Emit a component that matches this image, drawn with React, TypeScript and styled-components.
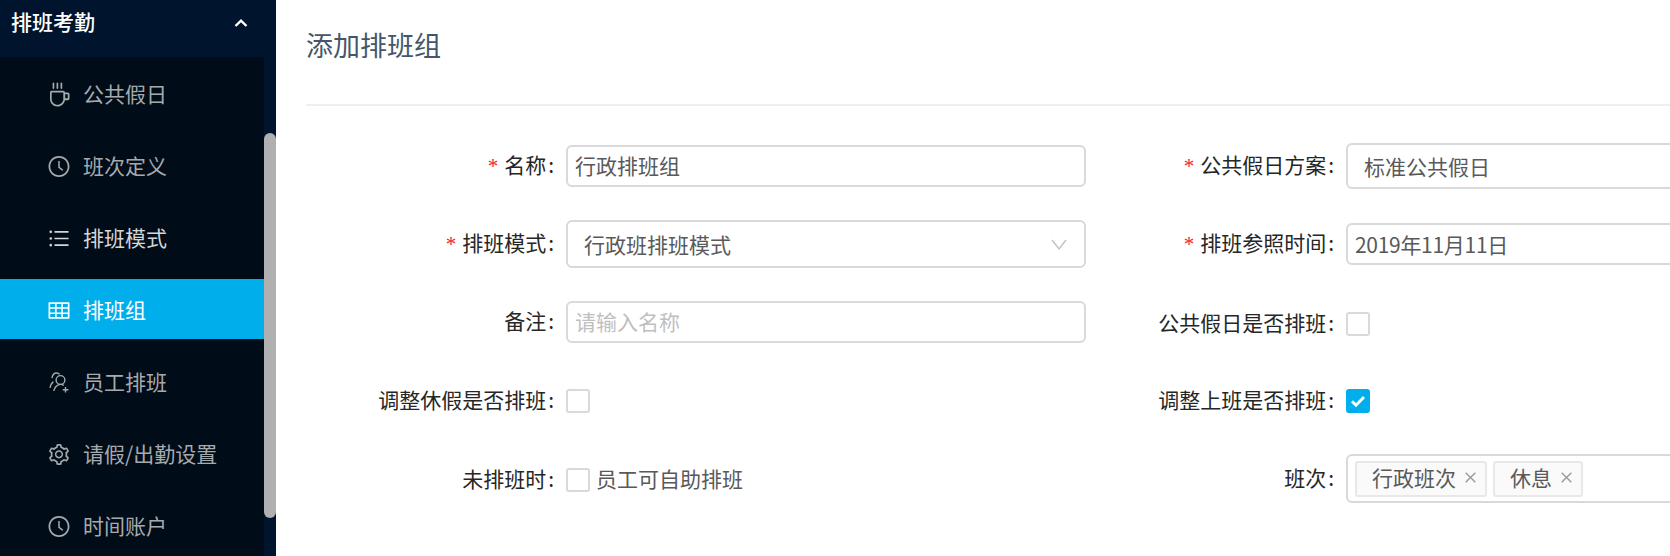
import React from "react";
import styled, { createGlobalStyle } from "styled-components";
import {
  AiOutlineClockCircle,
  AiOutlineCoffee,
  AiOutlineSetting,
  AiOutlineTable,
  AiOutlineUnorderedList,
} from "react-icons/ai";

const GlobalStyle = createGlobalStyle`
  html, body {
    margin: 0;
    height: 556px;
    overflow: hidden;
    background: #fff;
    font-family: "Noto Sans CJK SC", "Liberation Sans", sans-serif;
  }
`;

function UserPlusIcon() {
  return (
    <svg width="21" height="21" viewBox="0 0 21 21" fill="none" stroke="currentColor" strokeWidth="1.4">
      <path d="M3 6.2C3.4 3 5.4 1 7.6 1c1.2 0 2.3.5 3 1.4" />
      <path d="M4.3 9.6C2.6 11 1.5 13 1 15.8" />
      <circle cx="11.5" cy="8" r="4.4" />
      <path d="M4.8 19c.5-3.5 3.3-6.6 6.7-6.6 1.3 0 2.4.4 3.4 1" />
      <path d="M16.5 15v5.6M13.8 17.8h5.6" />
    </svg>
  );
}

const menuItems = [
  { label: "公共假日", icon: <AiOutlineCoffee /> },
  { label: "班次定义", icon: <AiOutlineClockCircle /> },
  { label: "排班模式", icon: <AiOutlineUnorderedList />, bright: true },
  { label: "排班组", icon: <AiOutlineTable />, active: true },
  { label: "员工排班", icon: <UserPlusIcon /> },
  { label: "请假/出勤设置", icon: <AiOutlineSetting /> },
  { label: "时间账户", icon: <AiOutlineClockCircle /> },
];

export default function App() {
  return (
    <Page>
      <GlobalStyle />
      <Sidebar>
        <GroupHeader>
          <span>排班考勤</span>
          <svg width="16" height="10" viewBox="0 0 16 10" fill="none" stroke="#fff" strokeWidth="2.4">
            <path d="M2.5 8L8 2.6 13.5 8" />
          </svg>
        </GroupHeader>
        <SideBody>
          <Menu>
            {menuItems.map((item) => (
              <MenuItem key={item.label} $active={item.active} $bright={item.bright}>
                <MenuIcon>{item.icon}</MenuIcon>
                {item.label}
              </MenuItem>
            ))}
          </Menu>
          <ScrollTrack>
            <ScrollThumb />
          </ScrollTrack>
        </SideBody>
      </Sidebar>

      <Main>
        <TitleBar>添加排班组</TitleBar>
        <FormGrid>
          <Field>
            <Label $required>名称</Label>
            <TextInput defaultValue="行政排班组" />
          </Field>
          <Field>
            <Label $required>公共假日方案</Label>
            <SelectBox $height={46}>标准公共假日</SelectBox>
          </Field>

          <Field>
            <Label $required>排班模式</Label>
            <SelectBox $height={48}>
              行政班排班模式
              <Caret width="16" height="11" viewBox="0 0 16 11" fill="none" stroke="#bfbfbf" strokeWidth="1.3">
                <path d="M1 1l7 9 7-9" />
              </Caret>
            </SelectBox>
          </Field>
          <Field>
            <Label $required>排班参照时间</Label>
            <DateInput defaultValue="2019年11月11日" />
          </Field>

          <Field>
            <Label>备注</Label>
            <TextInput placeholder="请输入名称" />
          </Field>
          <Field $shift={4}>
            <Label>公共假日是否排班</Label>
            <CheckBox />
          </Field>

          <Field>
            <Label>调整休假是否排班</Label>
            <CheckBox />
          </Field>
          <Field>
            <Label>调整上班是否排班</Label>
            <CheckBox $checked>
              <svg width="16" height="14" viewBox="0 0 16 14" fill="none" stroke="#fff" strokeWidth="3">
                <path d="M2 7.2l4 4L14 3" />
              </svg>
            </CheckBox>
          </Field>

          <Field>
            <Label>未排班时</Label>
            <CheckBox />
            <CheckText>员工可自助排班</CheckText>
          </Field>
          <Field $shift={-3}>
            <Label>班次</Label>
            <TagBox>
              <Tag>
                行政班次
                <TagClose />
              </Tag>
              <Tag>
                休息
                <TagClose />
              </Tag>
            </TagBox>
          </Field>
        </FormGrid>
      </Main>
    </Page>
  );
}

function TagClose() {
  return (
    <CloseIcon width="11" height="11" viewBox="0 0 11 11" fill="none" stroke="#999" strokeWidth="1.4">
      <path d="M.7.7l9.6 9.6M10.3.7L.7 10.3" />
    </CloseIcon>
  );
}

const Page = styled.div`
  display: flex;
  width: 1670px;
  height: 556px;
  overflow: hidden;
`;

const Sidebar = styled.aside`
  flex: 0 0 276px;
  height: 556px;
  background: #00152d;
  overflow: hidden;
`;

const GroupHeader = styled.div`
  display: flex;
  justify-content: space-between;
  align-items: center;
  height: 42px;
  padding: 0 27px 15px 11px;
  color: #fff;
  font-size: 21px;
  font-weight: 500;

  svg {
    margin-top: 4px;
  }
`;

const SideBody = styled.div`
  display: flex;
`;

const Menu = styled.ul`
  flex: 0 0 264px;
  height: 499px;
  margin: 0;
  padding: 6px 0 0;
  box-sizing: border-box;
  list-style: none;
  background: #000c17;
`;

const MenuItem = styled.li<{ $active?: boolean; $bright?: boolean }>`
  display: flex;
  align-items: center;
  box-sizing: border-box;
  height: 60px;
  margin-bottom: 12px;
  padding: 0 0 1px 47px;
  font-size: 21px;
  background: ${(p) => (p.$active ? "#00aeeb" : "transparent")};
  color: ${(p) => (p.$active ? "#fff" : p.$bright ? "#d4d6d8" : "#a6aaad")};
`;

const MenuIcon = styled.span`
  display: flex;
  align-items: center;
  justify-content: center;
  width: 24px;
  margin-top: 4px;
  margin-right: 12px;
  font-size: 25px;
`;

const ScrollTrack = styled.div`
  flex: 0 0 12px;
`;

const ScrollThumb = styled.div`
  width: 12px;
  height: 385px;
  margin-top: 76px;
  border-radius: 6px;
  background: #b0b0b0;
`;

const Main = styled.main`
  flex: 1;
  min-width: 0;
  padding-left: 30px;
  overflow: hidden;
`;

const TitleBar = styled.div`
  display: flex;
  align-items: center;
  height: 106px;
  padding-bottom: 16px;
  box-sizing: border-box;
  border-bottom: 2px solid #eeeeee;
  color: #44566a;
  font-size: 27px;
`;

const FormGrid = styled.div`
  display: grid;
  grid-template-columns: 780px 780px;
  grid-template-rows: 78px 78px 78px 80px 78px;
  margin-top: 21px;
`;

const Field = styled.div<{ $shift?: number }>`
  display: flex;
  align-items: center;
  margin-top: ${(p) => p.$shift ?? 0}px;
`;

const Label = styled.label<{ $required?: boolean }>`
  flex: 0 0 248px;
  margin-right: 12px;
  margin-bottom: 4px;
  text-align: right;
  color: #262626;
  font-size: 21px;
  white-space: nowrap;

  &::before {
    content: ${(p) => (p.$required ? '"*"' : "none")};
    margin-right: 6px;
    color: #f5222d;
    font-family: "Liberation Serif", serif;
    font-size: 21px;
  }

  &::after {
    content: ":";
    margin-left: 2px;
  }
`;

const TextInput = styled.input`
  width: 520px;
  height: 42px;
  box-sizing: border-box;
  padding: 0 7px 2px;
  border: 2px solid #d9d9d9;
  border-radius: 6px;
  outline: none;
  color: #595959;
  font-family: inherit;
  font-size: 21px;

  &::placeholder {
    color: #bfbfbf;
  }
`;

const DateInput = styled(TextInput)`
  padding-bottom: 0;
  letter-spacing: -0.3px;
`;

const SelectBox = styled.div<{ $height: number }>`
  display: flex;
  align-items: center;
  justify-content: space-between;
  width: 520px;
  height: ${(p) => p.$height}px;
  box-sizing: border-box;
  padding: 0 17px 0 16px;
  border: 2px solid #d9d9d9;
  border-radius: 6px;
  color: #595959;
  font-size: 21px;
`;

const Caret = styled.svg`
  flex: none;
`;

const CheckBox = styled.span<{ $checked?: boolean }>`
  display: flex;
  align-items: center;
  justify-content: center;
  width: 24px;
  height: 24px;
  box-sizing: border-box;
  border: 2px solid ${(p) => (p.$checked ? "#00aeeb" : "#d9d9d9")};
  border-radius: 3px;
  background: ${(p) => (p.$checked ? "#00aeeb" : "#fff")};
`;

const CheckText = styled.span`
  margin-left: 6px;
  margin-bottom: 4px;
  color: #595959;
  font-size: 21px;
`;

const TagBox = styled.div`
  display: flex;
  align-items: center;
  gap: 6px;
  width: 520px;
  height: 49px;
  box-sizing: border-box;
  padding: 0 7px;
  border: 2px solid #d9d9d9;
  border-radius: 6px;
`;

const Tag = styled.span`
  display: flex;
  align-items: center;
  height: 36px;
  box-sizing: border-box;
  padding: 0 9px 3px 15px;
  border: 2px solid #e8e8e8;
  border-radius: 3px;
  background: #fafafa;
  color: #595959;
  font-size: 21px;
`;

const CloseIcon = styled.svg`
  margin-left: 9px;
  margin-top: 1px;
`;
